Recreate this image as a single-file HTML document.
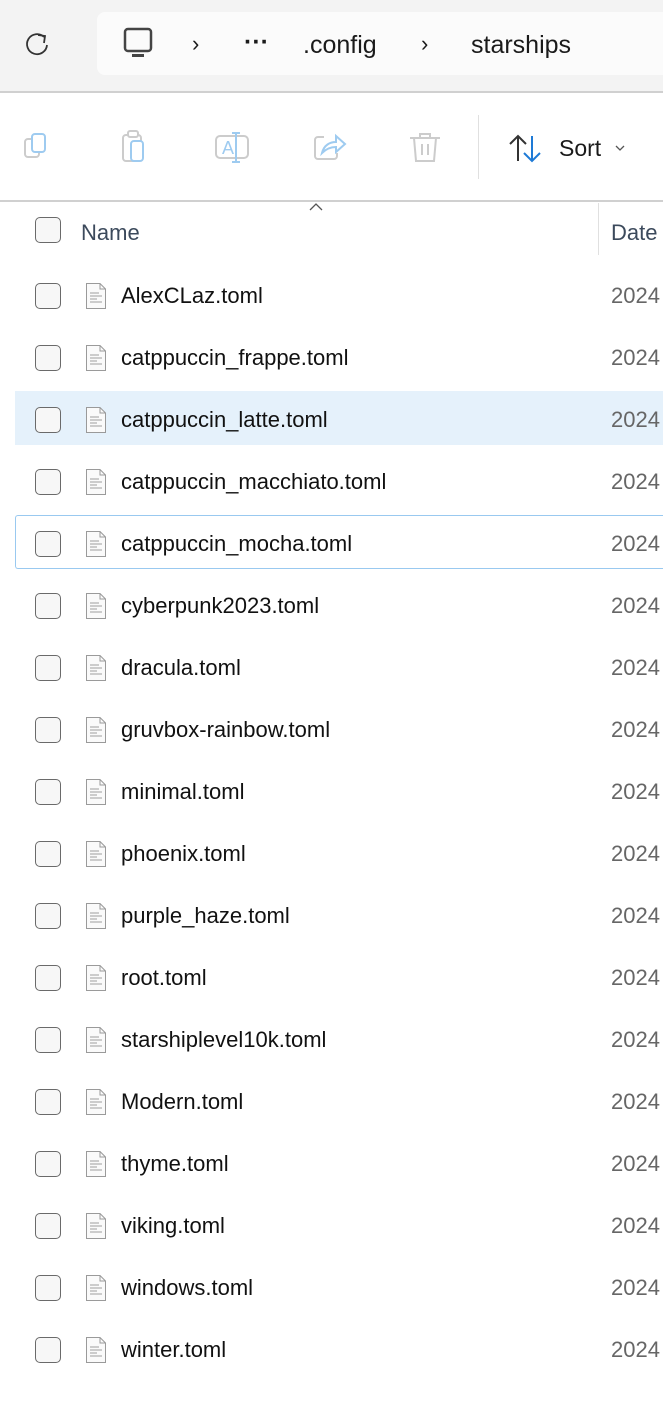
<!DOCTYPE html>
<html><head><style>
body{margin:0;width:663px;height:1419px;background:#fff;font-family:"Segoe UI","Liberation Sans",sans-serif;position:relative;overflow:hidden;color:#1a1a1a}
.top{position:absolute;left:0;top:0;width:663px;height:91px;background:#f3f3f3;border-bottom:2px solid #d0d0d0}
.addr{position:absolute;left:97px;top:12px;width:580px;height:63px;background:#fbfbfb;border-radius:8px}
.t{position:absolute;font-size:25px;color:#1a1a1a}
.tb{position:absolute;top:93px;left:0;width:663px;height:107px;border-bottom:2px solid #d0d0d0}
.row{position:absolute;left:15px;width:660px;height:54px}
.cb{position:absolute;left:20px;top:14px;width:26px;height:26px;border:1.3px solid #6a6a6a;border-radius:5px;background:#f7f7f7;box-sizing:border-box}
.fi{position:absolute;left:70px;top:13px}
.nm{position:absolute;left:106px;top:14px;font-size:22px;color:#111}
.dt{position:absolute;left:596px;top:14px;font-size:22px;color:#666}
</style></head><body>
<div class="top">
<svg style="position:absolute;left:24px;top:31px" width="26" height="28" viewBox="0 0 26 28"><path d="M20 6 A10 10 0 1 0 23 14" fill="none" stroke="#333" stroke-width="1.8"/><path d="M14 4 L21 5 L20 12" fill="none" stroke="#333" stroke-width="1.8"/></svg>
<div class="addr"></div>
<svg style="position:absolute;left:123px;top:27px" width="32" height="32" viewBox="0 0 32 32"><rect x="2" y="2" width="26" height="22" rx="3" fill="none" stroke="#444" stroke-width="2.5"/><rect x="9" y="27" width="12" height="3" fill="#444"/></svg>
<div class="t" style="left:192px;top:31px;font-size:22px">›</div>
<div class="t" style="left:244px;top:28px;font-weight:bold">···</div>
<div class="t" style="left:303px;top:31px">.config</div>
<div class="t" style="left:421px;top:31px;font-size:22px">›</div>
<div class="t" style="left:471px;top:31px">starships</div>
</div>
<div class="tb">
<svg style="position:absolute;left:22px;top:38px" width="34" height="34" viewBox="0 0 34 34"><rect x="3" y="8" width="14" height="18" rx="3" fill="none" stroke="#ccc" stroke-width="2"/><rect x="10" y="3" width="13" height="18" rx="3" fill="#fff" stroke="#9ecbf0" stroke-width="2"/></svg>
<svg style="position:absolute;left:120px;top:36px" width="34" height="36" viewBox="0 0 34 36"><rect x="3" y="6" width="18" height="26" rx="3" fill="none" stroke="#ccc" stroke-width="2"/><rect x="8" y="2" width="10" height="6" rx="2" fill="#fff" stroke="#ccc" stroke-width="2"/><rect x="11" y="12" width="12" height="20" rx="3" fill="#fff" stroke="#9ecbf0" stroke-width="2"/></svg>
<svg style="position:absolute;left:214px;top:38px" width="38" height="34" viewBox="0 0 38 34"><rect x="2" y="5" width="32" height="22" rx="4" fill="none" stroke="#ccc" stroke-width="2"/><text x="8" y="23" font-size="18" fill="#9ecbf0" font-family="Liberation Sans">A</text><path d="M22 2 V31 M18 2 H26 M18 31 H26" stroke="#9ecbf0" stroke-width="2"/></svg>
<svg style="position:absolute;left:312px;top:38px" width="36" height="34" viewBox="0 0 36 34"><path d="M12 6 H6 a3 3 0 0 0 -3 3 V25 a3 3 0 0 0 3 3 H22 a3 3 0 0 0 3 -3 V22" fill="none" stroke="#ccc" stroke-width="2"/><path d="M10 22 C12 14 18 11 24 11 V5 L33 13 L24 21 V16 C18 16 14 18 10 22Z" fill="none" stroke="#9ecbf0" stroke-width="2"/></svg>
<svg style="position:absolute;left:408px;top:38px" width="34" height="34" viewBox="0 0 34 34"><path d="M2 7 H32 M12 7 V3 H22 V7 M6 7 L8 30 H26 L28 7 M14 13 V24 M20 13 V24" fill="none" stroke="#ccc" stroke-width="2"/></svg>
<div style="position:absolute;left:478px;top:22px;width:1px;height:64px;background:#e0e0e0"></div>
<svg style="position:absolute;left:508px;top:40px" width="38" height="32" viewBox="0 0 38 32"><path d="M10 28 V3 M2 11 L10 3 L18 11" fill="none" stroke="#333" stroke-width="2"/><path d="M24 3 V28 M16 20 L24 28 L32 20" fill="none" stroke="#1e7ad6" stroke-width="2"/></svg>
<div class="t" style="left:559px;top:42px;font-size:23px">Sort</div>
<svg style="position:absolute;left:614px;top:51px" width="12" height="8" viewBox="0 0 12 8"><path d="M2 2 L6 6 L10 2" fill="none" stroke="#555" stroke-width="1.3"/></svg>
</div>
<svg style="position:absolute;left:309px;top:202px" width="14" height="9" viewBox="0 0 14 9"><path d="M1 8 L7 2 L13 8" fill="none" stroke="#555" stroke-width="1.3"/></svg>
<div style="position:absolute;left:598px;top:203px;width:1px;height:52px;background:#e0e0e0"></div>
<div class="cb" style="left:35px;top:217px;width:26px;height:26px"></div>
<div class="t" style="left:81px;top:220px;font-size:22px;color:#3c4a5c">Name</div>
<div class="t" style="left:611px;top:220px;font-size:22px;color:#3c4a5c">Date</div>
<div style="position:absolute;left:15px;top:391px;width:660px;height:54px;background:#e5f1fb"></div>
<div style="position:absolute;left:15px;top:515px;width:660px;height:54px;border:1px solid #99c9f0;box-sizing:border-box;border-right:none;border-radius:3px"></div>
<div id="rows"></div>
<script>
var n=["AlexCLaz.toml","catppuccin_frappe.toml","catppuccin_latte.toml","catppuccin_macchiato.toml","catppuccin_mocha.toml","cyberpunk2023.toml","dracula.toml","gruvbox-rainbow.toml","minimal.toml","phoenix.toml","purple_haze.toml","root.toml","starshiplevel10k.toml","Modern.toml","thyme.toml","viking.toml","windows.toml","winter.toml"];
var h="";
n.forEach(function(s,i){var y=269+i*62;
h+='<div class="row" style="top:'+y+'px"><div class="cb"></div><svg class="fi" width="22" height="28" viewBox="0 0 22 28"><path d="M1.5 1.5 H15 L20.5 7 V26.5 H1.5Z" fill="#fafafa" stroke="#9a9a9a" stroke-width="1"/><path d="M15 1.5 V7 H20.5" fill="none" stroke="#9a9a9a"/><path d="M5 11H14M5 14H17M5 17H12M5 20H17" stroke="#b0b0b0" stroke-width="1.3"/></svg><div class="nm">'+s+'</div><div class="dt">2024</div></div>';});
document.getElementById("rows").innerHTML=h;
</script>
</body></html>
